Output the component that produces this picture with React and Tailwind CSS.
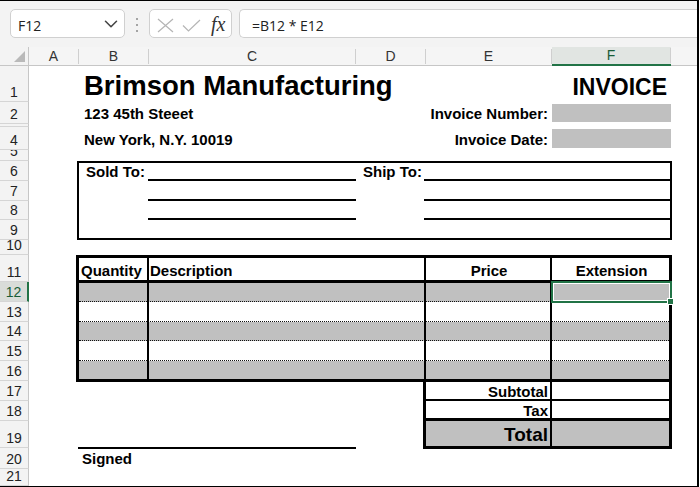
import React from "react";
import { ChevronDown } from "lucide-react";

const COLS = [
  { key: "A", cls: "col-start-2" },
  { key: "B", cls: "col-start-3" },
  { key: "C", cls: "col-start-4" },
  { key: "D", cls: "col-start-5" },
  { key: "E", cls: "col-start-6" },
  { key: "F", cls: "col-start-7", active: true },
  { key: "", cls: "col-start-8" },
];

const ROWS = [
  { n: 1, cls: "row-start-2" },
  { n: 2, cls: "row-start-3" },
  { n: 3, cls: "row-start-4" },
  { n: 4, cls: "row-start-5" },
  { n: 5, cls: "row-start-6" },
  { n: 6, cls: "row-start-7" },
  { n: 7, cls: "row-start-8" },
  { n: 8, cls: "row-start-9" },
  { n: 9, cls: "row-start-10" },
  { n: 10, cls: "row-start-11" },
  { n: 11, cls: "row-start-12" },
  { n: 12, cls: "row-start-13", active: true },
  { n: 13, cls: "row-start-14" },
  { n: 14, cls: "row-start-15" },
  { n: 15, cls: "row-start-16" },
  { n: 16, cls: "row-start-17" },
  { n: 17, cls: "row-start-18" },
  { n: 18, cls: "row-start-19" },
  { n: 19, cls: "row-start-20" },
  { n: 20, cls: "row-start-21" },
  { n: 21, cls: "row-start-22" },
];

const FormulaBar = () => (
  <div className="h-[46px] shrink-0 bg-[#f3f3f3] flex items-start pt-[8px] pl-[10px] font-['Open_Sans',sans-serif] text-[14px] text-[#222]">
    {/* name box */}
    <div className="w-[115px] h-[29px] bg-white border border-[#d0d0d0] rounded-[5px] flex items-center justify-between pl-[7px] pr-[2px] pt-[3px]">
      <span>F12</span>
      <ChevronDown size={22} strokeWidth={1.7} className="text-[#444] -mt-[2px]" />
    </div>

    <div className="w-[24px] h-[29px] flex flex-col items-center justify-center gap-[4px] pt-[3px]">
      <span className="w-[2px] h-[2px] rounded-full bg-[#8a8a8a]" />
      <span className="w-[2px] h-[2px] rounded-full bg-[#8a8a8a]" />
      <span className="w-[2px] h-[2px] rounded-full bg-[#8a8a8a]" />
    </div>

    {/* cancel / enter / fx */}
    <div className="w-[83px] h-[29px] bg-white border border-[#d0d0d0] rounded-[5px] flex items-center pl-[7px] pt-[3px]">
      <svg width="17" height="15" viewBox="0 0 17 15">
        <path d="M1 1L16 14M16 1L1 14" stroke="#b5b5b5" strokeWidth="1.2" fill="none" />
      </svg>
      <svg width="19" height="13" viewBox="0 0 19 13" className="ml-[8px]">
        <path d="M1 6.5L6.5 12L18 1" stroke="#b5b5b5" strokeWidth="1.2" fill="none" />
      </svg>
      <span className="ml-[10px] font-['Liberation_Serif',serif] italic text-[20px] leading-none text-[#333] -mt-[2px]">
        fx
      </span>
    </div>

    {/* formula */}
    <div className="ml-[7px] flex-1 h-[29px] bg-white border border-r-0 border-[#d0d0d0] rounded-l-[5px] flex items-center pl-[12px] pt-[3px]">
      =B12 * E12
    </div>
  </div>
);

const Sheet = () => (
  <div className="grid flex-1 grid-cols-[29px_50px_70px_207px_70px_126px_119px_1fr] grid-rows-[19px_36px_22px_3px_23px_11px_20px_20px_19px_20px_15px_27px_20px_20px_19px_20px_20px_20px_20px_27px_21px_17px]">
    {/* corner */}
    <div className="col-start-1 row-start-1 bg-[#f3f3f3] border-b border-r border-[#c6c6c6] flex items-end justify-end pr-[3px] pb-[3px]">
      <svg width="11" height="11" viewBox="0 0 11 11">
        <path d="M11 0V11H0Z" fill="#b9b9b9" />
      </svg>
    </div>

    {/* column headers */}
    {COLS.map((c) => (
      <div
        key={c.cls}
        className={
          c.active
            ? `row-start-1 ${c.cls} flex items-center bg-[#e1e5e2] border-b-2 border-[#217346] text-[14px] text-[#185c37]`
            : `row-start-1 ${c.cls} flex items-center bg-[#f5f5f5] border-b border-[#c6c6c6] text-[14px] text-[#333]`
        }
      >
        <span className="flex-1 text-center">{c.key}</span>
        {c.key && <span className="w-px h-[15px] bg-[#cfcfcf]" />}
      </div>
    ))}

    {/* row headers */}
    {ROWS.map((r) => (
      <div
        key={r.n}
        className={
          r.active
            ? `${r.cls} col-start-1 flex items-end justify-center overflow-hidden pb-[2px] bg-[#d9dcd9] border-b border-[#d5d5d5] border-r-2 border-r-[#217346] text-[14px] leading-none text-[#185c37]`
            : `${r.cls} col-start-1 flex items-end justify-center overflow-hidden pb-[2px] bg-[#f3f3f3] border-b border-[#d5d5d5] border-r border-r-[#c6c6c6] text-[14px] leading-none text-[#222]`
        }
      >
        {r.n}
      </div>
    ))}

    {/* ===== fills ===== */}
    <div className="col-start-7 row-start-3 my-[2px] bg-[#c0c0c0]" />
    <div className="col-start-7 row-start-5 my-[2px] bg-[#c0c0c0]" />
    <div className="col-start-3 col-end-8 row-start-13 bg-[#c0c0c0]" />
    <div className="col-start-3 col-end-8 row-start-15 bg-[#c0c0c0]" />
    <div className="col-start-3 col-end-8 row-start-17 bg-[#c0c0c0]" />
    <div className="col-start-6 col-end-8 row-start-20 bg-[#c0c0c0]" />

    {/* ===== sold to / ship to ===== */}
    <div className="col-start-4 row-start-7 -ml-[1px] border-b-2 border-black" />
    <div className="col-start-4 row-start-8 -ml-[1px] border-b-2 border-black" />
    <div className="col-start-4 row-start-9 -ml-[1px] border-b-2 border-black" />
    <div className="col-start-6 col-end-8 row-start-7 -ml-[2px] border-b-2 border-black" />
    <div className="col-start-6 col-end-8 row-start-8 -ml-[2px] border-b-2 border-black" />
    <div className="col-start-6 col-end-8 row-start-9 -ml-[2px] border-b-2 border-black" />
    <div className="col-start-3 col-end-8 row-start-7 row-end-11 -ml-[2px] -mr-[1px] border-2 border-black" />

    {/* ===== line items ===== */}
    <div className="col-start-3 col-end-8 row-start-13 border-b border-dotted border-[#111]" />
    <div className="col-start-3 col-end-8 row-start-14 border-b border-dotted border-[#111]" />
    <div className="col-start-3 col-end-8 row-start-15 border-b border-dotted border-[#111]" />
    <div className="col-start-3 col-end-8 row-start-16 border-b border-dotted border-[#111]" />
    <div className="col-start-3 col-end-8 row-start-12 -mb-[1px] border-b-[3px] border-black" />
    <div className="col-start-3 row-start-12 row-end-18 border-r-2 border-black" />
    <div className="col-start-4 col-end-6 row-start-12 row-end-18 border-r-2 border-black" />
    <div className="col-start-6 row-start-12 row-end-21 border-r-2 border-black" />
    <div className="col-start-3 col-end-8 row-start-12 row-end-18 -ml-[3px] -mr-[1px] -mb-[1px] border-[3px] border-black" />

    {/* ===== totals ===== */}
    <div className="col-start-6 col-end-8 row-start-18 border-b-2 border-black" />
    <div className="col-start-6 col-end-8 row-start-19 border-b-[3px] border-black" />
    <div className="col-start-6 col-end-8 row-start-18 row-end-21 -ml-[3px] -mr-[1px] -mt-[2px] -mb-[1px] border-[3px] border-black" />

    {/* signature line */}
    <div className="col-start-3 col-end-5 row-start-21 -ml-[1px] -mt-[1px] border-t-2 border-black" />

    {/* ===== text ===== */}
    <div className="col-start-3 col-end-7 row-start-2 flex items-end pl-[5px] pb-[3px] text-[27.5px] font-bold leading-none whitespace-nowrap">
      Brimson Manufacturing
    </div>
    <div className="col-start-6 col-end-8 row-start-2 flex items-end justify-end pr-[4px] pb-[3px] text-[23px] font-bold leading-none">
      INVOICE
    </div>
    <div className="col-start-3 col-end-5 row-start-3 flex items-end pl-[5px] pb-[3px] text-[15px] font-bold leading-none whitespace-nowrap">
      123 45th Steeet
    </div>
    <div className="col-start-5 col-end-7 row-start-3 flex items-end justify-end pr-[4px] pb-[3px] text-[15px] font-bold leading-none whitespace-nowrap">
      Invoice Number:
    </div>
    <div className="col-start-3 col-end-5 row-start-5 flex items-end pl-[5px] pb-[3px] text-[15px] font-bold leading-none whitespace-nowrap">
      New York, N.Y. 10019
    </div>
    <div className="col-start-5 col-end-7 row-start-5 flex items-end justify-end pr-[4px] pb-[3px] text-[15px] font-bold leading-none whitespace-nowrap">
      Invoice Date:
    </div>

    <div className="col-start-3 row-start-7 flex items-end pl-[7px] pb-[2px] text-[15px] font-bold leading-none whitespace-nowrap">
      Sold To:
    </div>
    <div className="col-start-5 row-start-7 flex items-end pl-[7px] pb-[2px] text-[15px] font-bold leading-none whitespace-nowrap">
      Ship To:
    </div>

    <div className="col-start-3 row-start-12 flex items-end pl-[2px] pb-[4px] text-[15px] font-bold leading-none">
      Quantity
    </div>
    <div className="col-start-4 row-start-12 flex items-end pl-[1px] pb-[4px] text-[15px] font-bold leading-none">
      Description
    </div>
    <div className="col-start-6 row-start-12 flex items-end justify-center pb-[4px] text-[15px] font-bold leading-none">
      Price
    </div>
    <div className="col-start-7 row-start-12 flex items-end justify-center pb-[4px] text-[15px] font-bold leading-none">
      Extension
    </div>

    <div className="col-start-6 row-start-18 flex items-end justify-end pr-[4px] pb-[2px] text-[15px] font-bold leading-none">
      Subtotal
    </div>
    <div className="col-start-6 row-start-19 flex items-end justify-end pr-[4px] pb-[3px] text-[15px] font-bold leading-none">
      Tax
    </div>
    <div className="col-start-6 row-start-20 flex items-end justify-end pr-[4px] pb-[4px] text-[19px] font-bold leading-none">
      Total
    </div>

    <div className="col-start-3 row-start-21 flex items-end pl-[3px] pb-[3px] text-[15px] font-bold leading-none">
      Signed
    </div>

    {/* active cell F12 */}
    <div className="col-start-7 row-start-13 relative">
      <div className="absolute -inset-[1px] border-2 border-[#217346]">
        <div className="absolute inset-0 border border-white" />
      </div>
      <div className="absolute -right-[2px] -bottom-[2px] w-[5px] h-[5px] bg-[#217346] outline outline-white" />
    </div>
  </div>
);

export default function App() {
  return (
    <div className="w-[699px] h-[487px] overflow-hidden bg-white border-t border-b border-r-2 border-black flex flex-col font-['Liberation_Sans',Arial,sans-serif] text-black">
      <FormulaBar />
      <Sheet />
    </div>
  );
}
